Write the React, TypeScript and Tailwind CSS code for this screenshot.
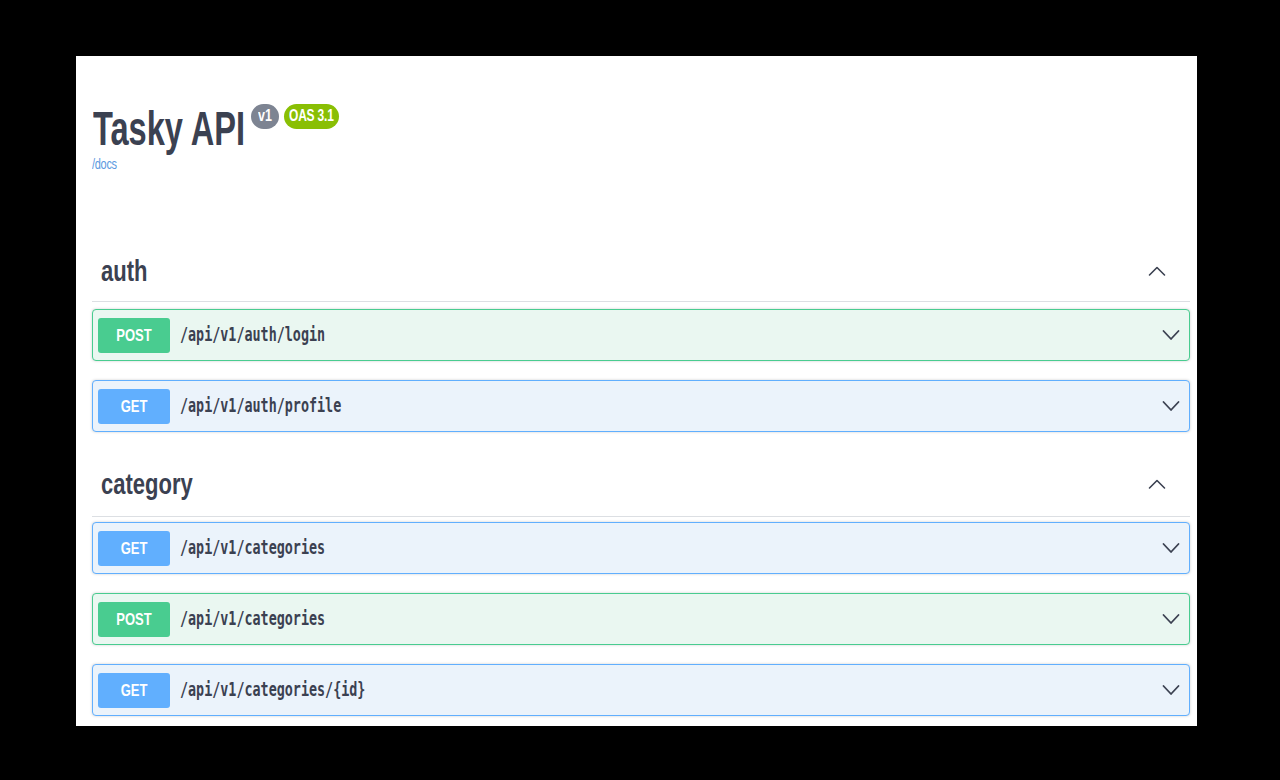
import React from 'react';

type Op = { method: 'GET' | 'POST'; path: string };

const methodStyles = {
  GET: {
    row: 'border-[#61affe] bg-[#ebf3fb]',
    badge: 'bg-[#61affe]',
  },
  POST: {
    row: 'border-[#49cc90] bg-[#eaf7f1]',
    badge: 'bg-[#49cc90]',
  },
};

function ChevronUp() {
  return (
    <svg width="18" height="12" viewBox="0 0 18 12" fill="none">
      <path d="M1.5 10L9 2.5L16.5 10" stroke="#3b4151" strokeWidth="1.6" strokeLinecap="round" strokeLinejoin="round" />
    </svg>
  );
}

function ChevronDown() {
  return (
    <svg width="18" height="12" viewBox="0 0 18 12" fill="none">
      <path d="M1.5 2L9 10L16.5 2" stroke="#3b4151" strokeWidth="1.8" strokeLinecap="round" strokeLinejoin="round" />
    </svg>
  );
}

function OpRow({ op }: { op: Op }) {
  const s = methodStyles[op.method];
  return (
    <div className={`flex items-center h-[52px] rounded-[4px] border px-[5px] shadow-[0_0_3px_rgba(0,0,0,0.19)] ${s.row}`}>
      <span className={`flex items-center justify-center w-[72px] h-[35px] rounded-[3px] ${s.badge}`}>
        <span className="inline-block scale-y-[1.3] text-white font-bold text-[13px] leading-[13px]">{op.method}</span>
      </span>
      <span className="ml-[10px] inline-block scale-y-[1.45] font-['DejaVu_Sans_Mono',monospace] font-bold text-[13.4px] leading-[16px] text-[#3b4151]">
        {op.path}
      </span>
      <span className="ml-auto mr-[4px] flex">
        <ChevronDown />
      </span>
    </div>
  );
}

function TagHeader({ name, pb }: { name: string; pb: string }) {
  return (
    <div className={`flex items-center justify-between pl-[9px] pr-[24px] border-b border-[#dcdfe3] ${pb}`}>
      <span className="inline-block scale-y-[1.37] text-[22px] leading-[22px] font-bold text-[#3b4151]">{name}</span>
      <ChevronUp />
    </div>
  );
}

export default function App() {
  const authOps: Op[] = [
    { method: 'POST', path: '/api/v1/auth/login' },
    { method: 'GET', path: '/api/v1/auth/profile' },
  ];
  const categoryOps: Op[] = [
    { method: 'GET', path: '/api/v1/categories' },
    { method: 'POST', path: '/api/v1/categories' },
    { method: 'GET', path: '/api/v1/categories/{id}' },
  ];

  return (
    <div className="w-[1280px] h-[780px] bg-black pt-[56px] pl-[76px] font-['Liberation_Sans',Arial,sans-serif]">
      <div className="w-[1121px] h-[670px] bg-white overflow-hidden pl-[16px] pr-[7px]">
        {/* title */}
        <div className="flex items-start mt-[56px] pl-[1px]">
          <span className="inline-block scale-y-[1.5] text-[32.6px] leading-[32px] font-bold text-[#3b4151]">Tasky API</span>
          <div className="flex gap-[5px] ml-[6px] mt-[-8px]">
            <span className="flex items-center h-[25px] px-[7px] rounded-full bg-[#7d8492]">
              <span className="inline-block scale-y-[1.3] text-white font-bold text-[12.5px] leading-[13px]">v1</span>
            </span>
            <span className="flex items-center h-[25px] px-[5px] rounded-full bg-[#89bf04]">
              <span className="inline-block scale-y-[1.3] text-white font-bold text-[12px] leading-[13px] tracking-[-0.2px]">OAS 3.1</span>
            </span>
          </div>
        </div>
        <div className="mt-[7px]">
          <span className="inline-block scale-y-[1.35] text-[11px] leading-[14px] text-[#5b9ae0] tracking-[-0.3px]">/docs</span>
        </div>

        {/* auth */}
        <div className="mt-[85px]">
          <TagHeader name="auth" pb="pb-[19px]" />
          <div className="mt-[7px] flex flex-col gap-[19px]">
            {authOps.map((op) => (
              <OpRow key={op.method + op.path} op={op} />
            ))}
          </div>
        </div>

        {/* category */}
        <div className="mt-[41px]">
          <TagHeader name="category" pb="pb-[21px]" />
          <div className="mt-[5px] flex flex-col gap-[19px]">
            {categoryOps.map((op) => (
              <OpRow key={op.method + op.path} op={op} />
            ))}
          </div>
        </div>
      </div>
    </div>
  );
}
